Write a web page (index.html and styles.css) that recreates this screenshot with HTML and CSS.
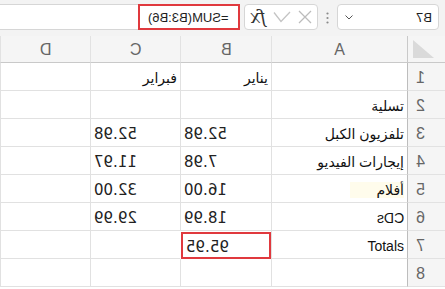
FILE: index.html
```html
<!DOCTYPE html>
<html lang="ar" dir="rtl">
<head>
  <meta charset="UTF-8" />
  <title>جدول المصروفات</title>
  <link rel="stylesheet" href="styles.css">
</head>
<body>

  <div class="toolbar">
    <div class="namebox">
      <span class="m">B7</span>
      <svg class="chev" width="8" height="5" viewBox="0 0 8 5"><path d="M0.5 0.5 L4 4 L7.5 0.5" fill="none" stroke="#555" stroke-width="1"/></svg>
    </div>
    <svg class="dots" width="3" height="12" viewBox="0 0 3 12">
      <circle cx="1.5" cy="1.5" r="1.1" fill="#8a8a8a"/>
      <circle cx="1.5" cy="6" r="1.1" fill="#8a8a8a"/>
      <circle cx="1.5" cy="10.5" r="1.1" fill="#8a8a8a"/>
    </svg>
    <div class="fxbox">
      <svg class="ico" width="14" height="14" viewBox="0 0 14 14"><path d="M1 1 L13 13 M13 1 L1 13" stroke="#bcbcbc" stroke-width="1.3" fill="none"/></svg>
      <svg class="ico" width="18" height="12" viewBox="0 0 18 12"><path d="M1 1.5 L8 10.5 L17 1" stroke="#c4c4c4" stroke-width="1.3" fill="none"/></svg>
      <span class="fx m">fx</span>
    </div>
    <div class="formula">
      <div class="hl"><span class="m">=SUM(B3:B6)</span></div>
    </div>
  </div>

  <div class="sheet">
    <div class="corner"><div class="tri"></div></div>
    <div class="colhead">A</div>
    <div class="colhead"><span class="m">B</span></div>
    <div class="colhead"><span class="m">C</span></div>
    <div class="colhead"><span class="m">D</span></div>

    <div class="rowhead"><span class="m">1</span></div>
    <div class="cell"></div>
    <div class="cell txt">يناير</div>
    <div class="cell txt">فبراير</div>
    <div class="cell"></div>

    <div class="rowhead"><span class="m">2</span></div>
    <div class="cell txt">تسلية</div>
    <div class="cell"></div>
    <div class="cell"></div>
    <div class="cell"></div>

    <div class="rowhead"><span class="m">3</span></div>
    <div class="cell txt">تلفزيون الكبل</div>
    <div class="cell num"><span class="m">52.98</span></div>
    <div class="cell num"><span class="m">52.98</span></div>
    <div class="cell"></div>

    <div class="rowhead"><span class="m">4</span></div>
    <div class="cell txt">إيجارات الفيديو</div>
    <div class="cell num"><span class="m">7.98</span></div>
    <div class="cell num"><span class="m">11.97</span></div>
    <div class="cell"></div>

    <div class="rowhead"><span class="m">5</span></div>
    <div class="cell txt"><span class="mark">أفلام</span></div>
    <div class="cell num"><span class="m">16.00</span></div>
    <div class="cell num"><span class="m">32.00</span></div>
    <div class="cell"></div>

    <div class="rowhead"><span class="m">6</span></div>
    <div class="cell txt"><span class="m">CDs</span></div>
    <div class="cell num"><span class="m">18.99</span></div>
    <div class="cell num"><span class="m">29.99</span></div>
    <div class="cell"></div>

    <div class="rowhead"><span class="m">7</span></div>
    <div class="cell txt">Totals</div>
    <div class="cell num sel"><span class="m">95.95</span></div>
    <div class="cell"></div>
    <div class="cell"></div>

    <div class="rowhead"><span class="m">8</span></div>
    <div class="cell"></div>
    <div class="cell"></div>
    <div class="cell"></div>
    <div class="cell"></div>
  </div>

</body>
</html>
```

FILE: styles.css
```css
* { box-sizing: border-box; }
body {
  margin: 0;
  background: #fff;
  color: #1e1e1e;
  font-family: "Liberation Sans", "DejaVu Sans", sans-serif;
  overflow: hidden;
}

/* glyphs of latin text appear mirrored in this sheet */
.m { display: inline-block; direction: ltr; unicode-bidi: isolate; transform: scaleX(-1); }

/* ----- formula bar ----- */
.toolbar {
  height: 36px;
  padding: 4px 6px 0 0;
  background: #f3f3f3;
  display: flex;
  align-items: flex-start;
}
.namebox {
  width: 102px; height: 26px;
  background: #fff;
  border: 1px solid #d6d6d6;
  border-radius: 4px;
  display: flex; align-items: center; justify-content: space-between;
  padding: 0 6px 0 7px;
  font-size: 13px;
}
.chev   { margin-top: 1px; }
.dots   { margin: 8px 8px 0 8px; }
.fxbox {
  width: 74px; height: 26px;
  background: #fff;
  border: 1px solid #d6d6d6;
  border-radius: 4px;
  display: flex; align-items: center;
  padding: 0 5px 0 4px;
  gap: 7px;
}
.fx {
  font-family: "DejaVu Serif", serif;
  font-style: italic;
  font-size: 18px;
  line-height: 1;
  color: #333;
  letter-spacing: -1px;
}
.formula {
  flex: 1;
  height: 26px;
  margin-right: 4px;
  background: #fff;
  border: 1px solid #d6d6d6;
  border-left: none;
}
.hl {
  width: 102px; height: 26px;
  margin: -1px -1px 0 0;
  border: 2px solid #e0393e;
  display: flex; align-items: center;
  padding-right: 9px;
  font-size: 13px;
}

/* ----- grid ----- */
.sheet {
  display: grid;
  grid-template-columns: 38px 136px 91px 90px 90px;
  grid-template-rows: 27px repeat(8, 28px);
}
.corner, .colhead {
  background: #f5f5f5;
  border-bottom: 1px solid #c9c9c9;
}
.corner { border-left: 1px solid #c9c9c9; display: flex; justify-content: flex-end; padding: 4px 0 0 5px; }
.tri {
  width: 21px; height: 18px;
  background: #dadada;
  clip-path: polygon(0 0, 0 100%, 100% 100%);
}
.colhead {
  border-left: 1px solid #e2e2e2;
  display: flex; align-items: center; justify-content: center;
  font-size: 16px; color: #666;
  padding-top: 1px;
}
.rowhead {
  background: #f5f5f5;
  border-left: 1px solid #bdbdbd;
  border-bottom: 1px solid #e2e2e2;
  display: flex; align-items: center; justify-content: flex-end;
  padding: 2px 0 0 8px;
  font-size: 16px; color: #666;
}
.cell {
  border-left: 1px solid #e1e1e1;
  border-bottom: 1px solid #e1e1e1;
  display: flex; align-items: center;
  padding: 2px 3px 0 3px;
  white-space: nowrap;
  overflow: hidden;
}
.txt  { font-size: 14px; color: #111; }
.num  { justify-content: flex-end; font-family: "DejaVu Sans", sans-serif; font-size: 15px; color: #222; }
.mark { background: #fffcec; padding-left: 26px; }
.sel  { border: 2px solid #e0393e; margin: 1px 0 0 1px; }
```
